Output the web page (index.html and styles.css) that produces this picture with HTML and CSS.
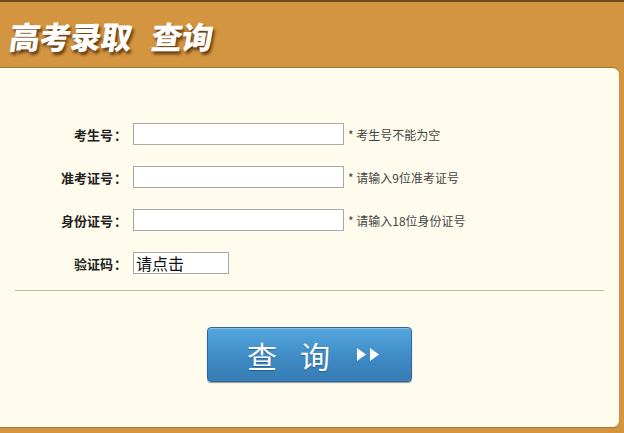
FILE: index.html
```html
<!DOCTYPE html>
<html lang="zh-CN">
<head>
<meta charset="utf-8">
<title>高考录取查询</title>
<link rel="stylesheet" href="styles.css">
</head>
<body>
<div class="page">
  <header class="header">
    <h1 class="title"><span class="t1">高考录取</span><span class="t2">查询</span></h1>
  </header>
  <main class="panel">
    <form class="form">
      <label class="label" for="ksh">考生号</label>
      <input class="field" id="ksh" type="text">
      <span class="hint">* 考生号不能为空</span>

      <label class="label" for="zkz">准考证号</label>
      <input class="field" id="zkz" type="text">
      <span class="hint">* 请输入9位准考证号</span>

      <label class="label" for="sfz">身份证号</label>
      <input class="field" id="sfz" type="text">
      <span class="hint">* 请输入18位身份证号</span>

      <label class="label" for="yzm">验证码</label>
      <input class="field captcha" id="yzm" type="text" value="请点击">
      <span class="hint"></span>
    </form>
    <div class="divider"></div>
    <div class="actions">
      <button class="btn" type="button">
        <span class="btn-char">查</span><span class="btn-char">询</span>
        <svg class="arrows" width="24" height="13" viewBox="0 0 24 13"><polygon points="0,0 9,6.5 0,13" fill="#fff"/><polygon points="13,0 22,6.5 13,13" fill="#fff"/></svg>
      </button>
    </div>
  </main>
</div>
</body>
</html>
```

FILE: styles.css
```css
html, body {
  margin: 0;
  padding: 0;
}
body {
  background: #d49540;
  font-family: "Noto Sans CJK SC", "Noto Sans", sans-serif;
  width: 624px;
  height: 433px;
  overflow: hidden;
}
.page {
  display: flex;
  flex-direction: column;
  height: 433px;
}
.header {
  height: 66px;
  border-top: 2px solid #6e4a1c;
  background: #d49540;
  display: flex;
  align-items: center;
  padding-left: 10px;
}
.title {
  margin: 0;
  font-size: 31px;
  font-weight: 900;
  color: #fff;
  line-height: 1;
  text-shadow: 2px 3px 3px rgba(60, 30, 0, 0.75);
  transform: skewX(-8deg);
  display: flex;
  gap: 20px;
  letter-spacing: -0.5px;
}
.panel {
  width: 619px;
  height: 359px;
  box-sizing: border-box;
  background: #fffcee;
  border-radius: 0 6px 6px 0;
  box-shadow: 0 -1px 1px rgba(90, 70, 40, 0.45), 0 1px 1px rgba(90, 70, 40, 0.35);
  padding-top: 55px;
}
.form {
  display: grid;
  grid-template-columns: 127px 211px auto;
  grid-auto-rows: 22px;
  column-gap: 6px;
  row-gap: 21px;
  align-items: center;
}
.form .hint {
  margin-left: -2px;
}
.label {
  text-align: right;
  font-size: 13px;
  font-weight: 700;
  color: #222;
  white-space: nowrap;
}
.label::after {
  content: "：";
  font-family: "Noto Sans CJK TC", "Noto Sans CJK SC", sans-serif;
  margin-left: 1px;
}
.field {
  box-sizing: border-box;
  height: 22px;
  width: 211px;
  border: 1px solid #a8a8a8;
  background: #fff;
  margin: 0;
  padding: 0 3px;
  font-family: "Noto Sans CJK SC", sans-serif;
  outline: none;
}
.captcha {
  width: 96px;
  font-size: 16px;
  font-weight: 400;
  color: #111;
  padding: 0 2px;
  line-height: 20px;
}
.hint {
  font-size: 12px;
  color: #444;
  white-space: nowrap;
}
.divider {
  height: 1px;
  background: #bfb78f;
  margin: 16px 15px 0 15px;
}
.actions {
  display: flex;
  justify-content: center;
  padding-top: 36px;
}
.btn {
  box-sizing: border-box;
  width: 205px;
  height: 55px;
  border: 1px solid #2f6898;
  border-radius: 4px;
  background: linear-gradient(#55a7df, #3f8bc5 55%, #377cb3);
  box-shadow: inset 0 1px 0 rgba(255, 255, 255, 0.3), 0 1px 1px rgba(20, 50, 80, 0.5);
  display: flex;
  align-items: center;
  padding: 0 0 0 39px;
  gap: 23px;
  cursor: pointer;
}
.btn-char {
  font-family: "Noto Sans CJK SC", sans-serif;
  font-size: 30px;
  font-weight: 400;
  color: #fff;
  line-height: 1;
  text-shadow: 0 1px 1px rgba(0, 40, 80, 0.4);
}
.arrows {
  margin-left: 4px;
  display: block;
}
```
